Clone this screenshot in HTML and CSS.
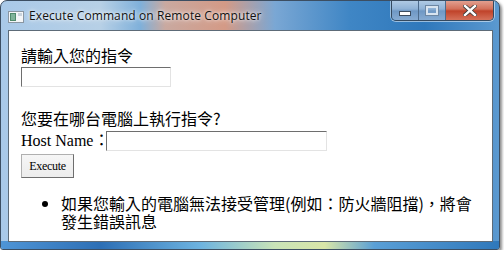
FILE: index.html
```html
<!DOCTYPE html>
<html lang="zh-Hant">
<head>
    <meta charset="UTF-8">
    <title>Execute Command on Remote Computer</title>
    <link rel="stylesheet" href="styles.css">
</head>
<body>

    <div class="window">
        <div class="titlebar">
            <svg class="app-icon" width="16" height="12" viewBox="0 0 16 12">
                <rect x="0.5" y="0.5" width="15" height="11" fill="#f4f6f8" stroke="#8a96a2"/>
                <rect x="2" y="2" width="6" height="8" fill="#4f8a6c"/>
                <rect x="3" y="3" width="4" height="6" fill="#7fb39a"/>
                <rect x="10" y="2" width="4" height="3" fill="#c9d3dc"/>
            </svg>
            <span class="title">Execute Command on Remote Computer</span>
            <div class="controls">
                <div class="ctl ctl-min"><span class="min-bar"></span></div>
                <div class="ctl ctl-max"><span class="max-box"></span></div>
                <div class="ctl ctl-close">
                    <svg width="14" height="11" viewBox="0 0 14 11">
                        <path d="M2 1 L12 10 M12 1 L2 10" stroke="#3a3a3a" stroke-width="4" stroke-linecap="square"/>
                        <path d="M2 1 L12 10 M12 1 L2 10" stroke="#ffffff" stroke-width="2.4" stroke-linecap="square"/>
                    </svg>
                </div>
            </div>
        </div>

        <div class="client">
            <p class="label">請輸入您的指令</p>
            <input type="text" class="cmd-input">

            <p class="label question">您要在哪台電腦上執行指令?</p>
            <div class="host-row">
                <span class="host-label">Host Name：</span>
                <input type="text" class="host-input">
            </div>
            <button class="exec-button">Execute</button>

            <ul class="notes">
                <li>如果您輸入的電腦無法接受管理(例如：防火牆阻擋)，將會發生錯誤訊息</li>
            </ul>
        </div>
    </div>

</body>
</html>
```

FILE: styles.css
```css
body {
    margin: 0;
    background-color: #ffffff;
    font-family: "Noto Sans CJK TC", "Liberation Serif", serif;
}

/* Aero style window frame */
.window {
    width: 498px;
    height: 248px;
    border: 1px solid #3c4e62;
    border-radius: 7px 7px 3px 3px;
    box-shadow: 2px 2px 3px rgba(0, 0, 0, 0.45);
    background:
        linear-gradient(90deg, #a9c9e8 0%, #b7d0e6 20%, #7fb0da 28%, #c9a9a0 33%, #d49a86 45%, #7aa7d4 55%, #3f86c5 70%, #2f78bb 85%, #5b99d0 100%);
    display: flex;
    flex-direction: column;
    overflow: hidden;
    position: relative;
}

.window::before {
    content: "";
    position: absolute;
    left: 0;
    right: 0;
    bottom: 0;
    height: 8px;
    background: linear-gradient(90deg, #4f95d6 0%, #2d6fb5 20%, #6db3e0 40%, #c9e4b8 55%, #d9e6a8 65%, #5a9fd6 75%, #2f78bb 100%);
}

.titlebar {
    height: 29px;
    display: flex;
    align-items: flex-start;
    position: relative;
}

.app-icon {
    margin: 10px 0 0 7px;
}

.title {
    font-family: "Open Sans", "Noto Sans", sans-serif;
    font-size: 12px;
    line-height: 16px;
    color: #111;
    margin: 7px 0 0 5px;
    letter-spacing: 0.1px;
    text-shadow: 0 0 6px rgba(255, 255, 255, 0.9), 0 0 3px rgba(255, 255, 255, 0.9);
}

.controls {
    margin-left: auto;
    margin-right: 5px;
    margin-top: -1px;
    display: flex;
    border: 1px solid #34495f;
    border-top: none;
    border-radius: 0 0 5px 5px;
    overflow: hidden;
    box-shadow: 0 0 0 1px rgba(255, 255, 255, 0.5);
}

.ctl {
    height: 20px;
    display: flex;
    align-items: center;
    justify-content: center;
}

.ctl-min, .ctl-max {
    width: 26px;
    background: linear-gradient(180deg, #b3cde6 0%, #8fb2d6 45%, #6f98c4 55%, #86abd2 100%);
    border-right: 1px solid #4c6b8c;
}

.ctl-close {
    width: 47px;
    background: linear-gradient(180deg, #e4a596 0%, #d3705a 45%, #c0432a 55%, #d5715a 100%);
}

.min-bar {
    width: 10px;
    height: 3px;
    background: #fff;
    border: 1px solid #3c4d60;
    margin-top: 6px;
}

.max-box {
    width: 8px;
    height: 5px;
    border: 2px solid #d8e4f0;
    outline: 1px solid #6d87a3;
}

.client {
    flex: 1;
    margin: 0 6px 7px 7px;
    border: 1px solid #5d6b78;
    background-color: #ffffff;
    padding: 15px 12px 0 12px;
    position: relative;
    z-index: 1;
}

.label {
    margin: 0;
    font-size: 16px;
    line-height: 19px;
    color: #000;
}

.question {
    margin-top: 22px;
}

input[type="text"] {
    box-sizing: border-box;
    height: 20px;
    margin: 0;
    border: 1px solid #a0a0a0;
    border-top-color: #6e6e6e;
    border-left-color: #6e6e6e;
    border-right-color: #e3e3e3;
    border-bottom-color: #e3e3e3;
    padding: 0 2px;
}

.cmd-input {
    width: 150px;
    margin-top: 2px !important;
    display: block;
}

.host-row {
    display: flex;
    align-items: center;
    margin-top: 3px;
}

.host-label {
    font-family: "Liberation Serif", "Noto Sans CJK TC", serif;
    font-size: 16px;
    line-height: 20px;
    margin-right: -3px;
}

.host-input {
    width: 221px;
}

.exec-button {
    display: block;
    margin-top: 3px;
    width: 53px;
    height: 24px;
    font-family: "Liberation Serif", serif;
    font-size: 12px;
    letter-spacing: -0.3px;
    color: #000;
    background: linear-gradient(180deg, #f6f6f6 0%, #ececec 100%);
    border: 1px solid #b0b0b0;
    border-right-color: #6e6e6e;
    border-bottom-color: #6e6e6e;
    padding: 0;
}

.notes {
    margin: 16px 0 0 0;
    padding-left: 40px;
    width: 420px;
    font-size: 16px;
    line-height: 18px;
    color: #000;
}
```
